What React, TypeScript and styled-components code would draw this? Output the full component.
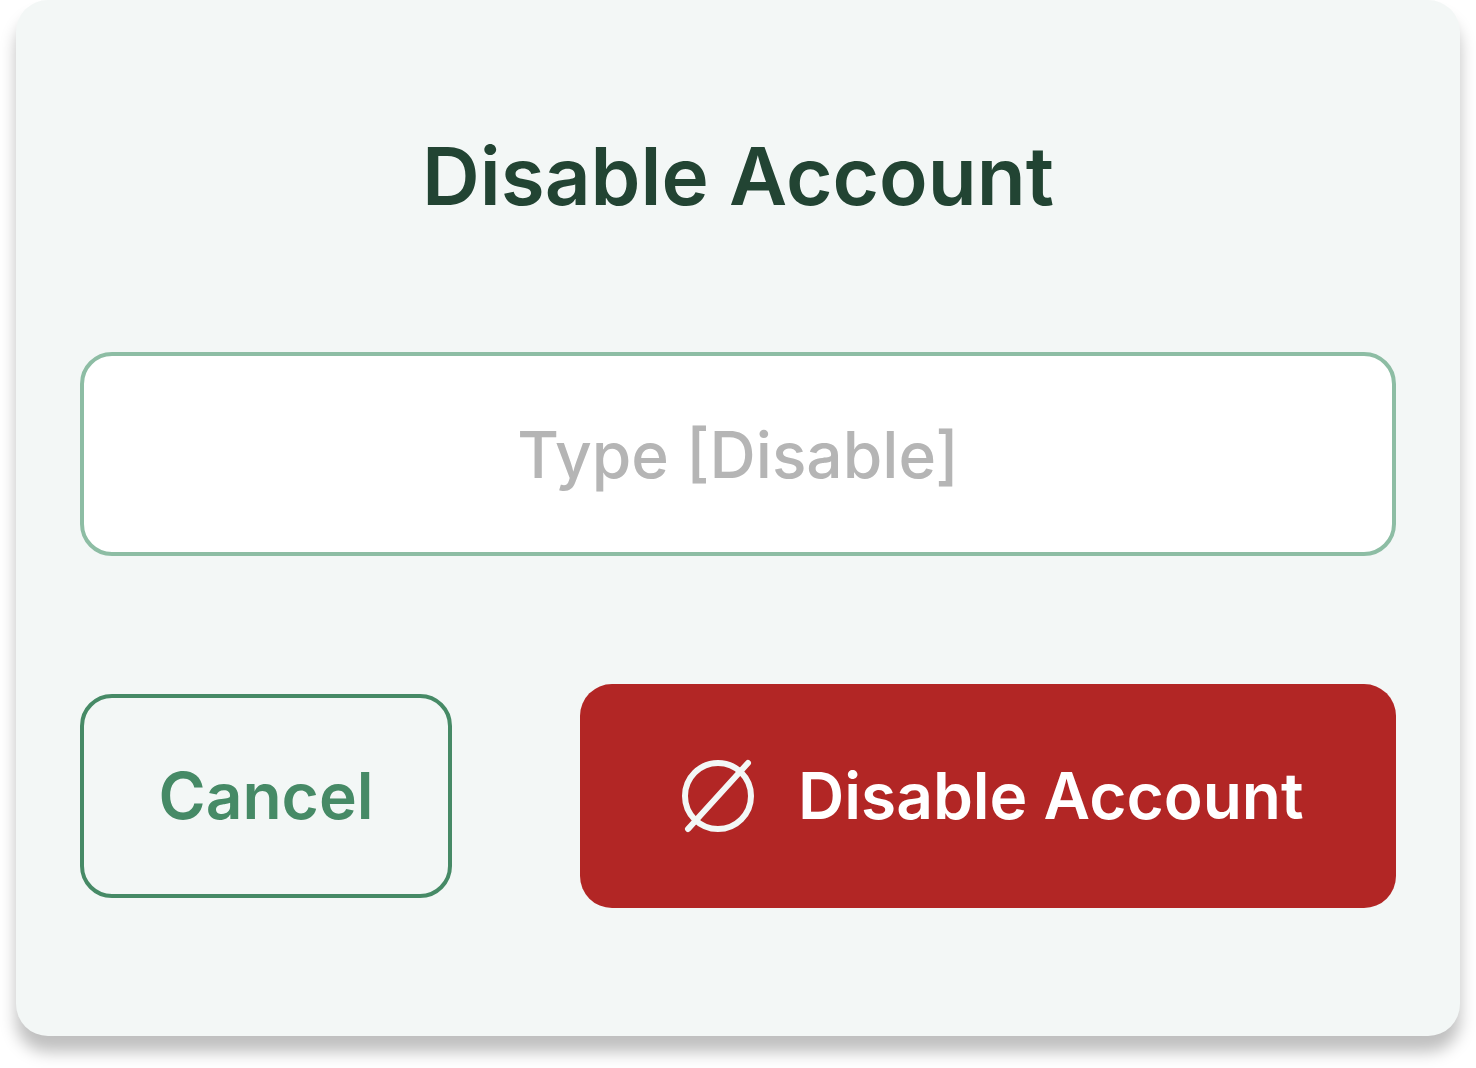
import React, { useState } from "react";
import styled, { createGlobalStyle } from "styled-components";

const GlobalStyle = createGlobalStyle`
  *, *::before, *::after { box-sizing: border-box; }
  body {
    margin: 0;
    background: #ffffff;
    font-family: Inter, "Liberation Sans", sans-serif;
  }
`;

const Page = styled.main`
  padding: 0 16px 32px;
`;

const Dialog = styled.form`
  display: flex;
  flex-direction: column;
  gap: 128px;
  padding: 128px 64px;
  border-radius: 32px;
  background: #f3f7f6;
  box-shadow: 0 16px 16px rgba(0, 0, 0, 0.25);
`;

const Title = styled.h1`
  margin: 0;
  color: #224433;
  font-size: 80px;
  font-weight: 600;
  line-height: 96px;
  text-align: center;
`;

const ConfirmInput = styled.input`
  width: 100%;
  height: 204px;
  padding: 0 76px;
  border: 4px solid #8dbda4;
  border-radius: 32px;
  background: #ffffff;
  color: #224433;
  font-family: inherit;
  font-size: 64px;
  font-weight: 500;
  line-height: 76px;
  text-align: center;
  outline: none;

  &::placeholder {
    color: #b5b5b5;
    opacity: 1;
  }
`;

const Actions = styled.div`
  display: flex;
  align-items: center;
  justify-content: space-between;
  gap: 128px;
`;

const Button = styled.button`
  display: flex;
  align-items: center;
  justify-content: center;
  border-radius: 32px;
  font-family: inherit;
  font-size: 64px;
  font-weight: 600;
  line-height: 76px;
  cursor: pointer;
`;

const CancelButton = styled(Button)`
  flex: none;
  min-width: 372px;
  padding: 60px 72px;
  border: 4px solid #468a66;
  background: transparent;
  color: #468a66;
`;

const DangerButton = styled(Button)`
  flex: 1 1 auto;
  justify-content: flex-start;
  gap: 32px;
  padding: 64px 90px;
  border: 0;
  background: #b22625;
  color: #ffffff;
`;

const Icon = styled.svg`
  width: 96px;
  height: 96px;
  flex: none;
`;

function DisableIcon() {
  return (
    <Icon viewBox="0 0 96 96" fill="none" stroke="#f3f7f6" strokeWidth="6" strokeLinecap="round" aria-hidden="true">
      <circle cx="48" cy="48" r="33" />
      <path d="M18 81 78 15" />
    </Icon>
  );
}

export default function App() {
  const [value, setValue] = useState("");
  return (
    <Page>
      <GlobalStyle />
      <Dialog onSubmit={(e) => e.preventDefault()}>
        <Title>Disable Account</Title>
        <ConfirmInput
          type="text"
          aria-label="Type [Disable]"
          placeholder="Type [Disable]"
          value={value}
          onChange={(e) => setValue(e.target.value)}
        />
        <Actions>
          <CancelButton type="button">Cancel</CancelButton>
          <DangerButton type="submit">
            <DisableIcon />
            Disable Account
          </DangerButton>
        </Actions>
      </Dialog>
    </Page>
  );
}
